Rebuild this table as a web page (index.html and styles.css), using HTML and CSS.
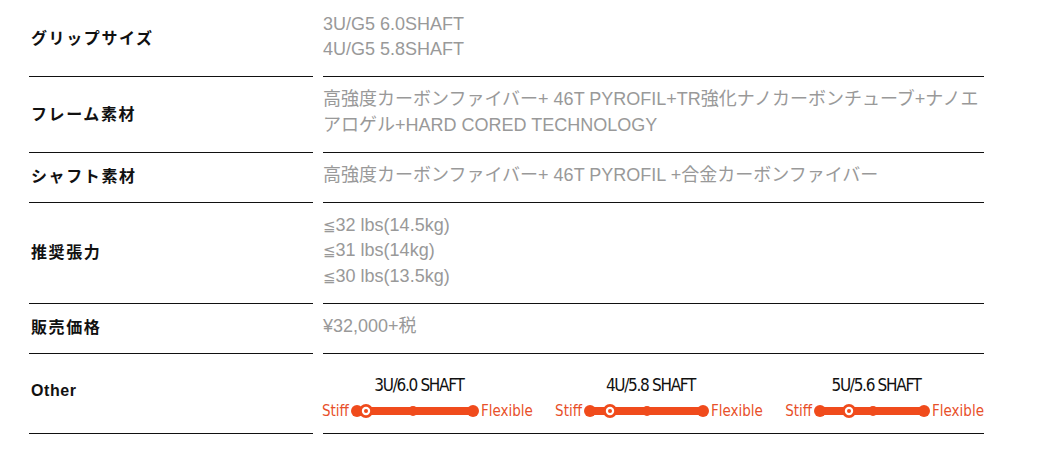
FILE: index.html
```html
<!DOCTYPE html>
<html lang="ja">
<head>
<meta charset="utf-8">
<title>Spec</title>
<link rel="stylesheet" href="styles.css">
</head>
<body>
<div class="spec">
  <div class="label first">グリップサイズ</div>
  <div class="value first">3U/G5 6.0SHAFT<br>4U/G5 5.8SHAFT</div>

  <div class="label">フレーム素材</div>
  <div class="value">高強度カーボンファイバー+ 46T PYROFIL+TR強化ナノカーボンチューブ+ナノエアロゲル+HARD CORED TECHNOLOGY</div>

  <div class="label">シャフト素材</div>
  <div class="value">高強度カーボンファイバー+ 46T PYROFIL +合金カーボンファイバー</div>

  <div class="label">推奨張力</div>
  <div class="value"><span class="le">≦</span>32 lbs(14.5kg)<br><span class="le">≦</span>31 lbs(14kg)<br><span class="le">≦</span>30 lbs(13.5kg)</div>

  <div class="label">販売価格</div>
  <div class="value">¥32,000+税</div>

  <div class="label latin">Other</div>
  <div class="value charts">
    <div class="shaft">
      <span class="end">Stiff</span>
      <div class="mid">
        <div class="title">3U/6.0 SHAFT</div>
        <svg class="bar" width="128" height="14" viewBox="0 0 128 14">
          <line x1="6" y1="7" x2="122" y2="7" stroke="#f04b1c" stroke-width="8"/>
          <circle cx="6" cy="7" r="6" fill="#f04b1c"/>
          <circle cx="122" cy="7" r="6" fill="#f04b1c"/>
          <circle cx="62" cy="7" r="5" fill="#f04b1c"/>
          <circle cx="15" cy="7" r="7" fill="#f04b1c"/>
          <circle cx="15" cy="7" r="4.2" fill="#fff"/>
          <circle cx="15" cy="7" r="2" fill="#f04b1c"/>
        </svg>
      </div>
      <span class="end">Flexible</span>
    </div>
    <div class="shaft">
      <span class="end">Stiff</span>
      <div class="mid">
        <div class="title">4U/5.8 SHAFT</div>
        <svg class="bar" width="125" height="14" viewBox="0 0 125 14">
          <line x1="6" y1="7" x2="119" y2="7" stroke="#f04b1c" stroke-width="8"/>
          <circle cx="6" cy="7" r="6" fill="#f04b1c"/>
          <circle cx="119" cy="7" r="6" fill="#f04b1c"/>
          <circle cx="63" cy="7" r="5" fill="#f04b1c"/>
          <circle cx="26" cy="7" r="7" fill="#f04b1c"/>
          <circle cx="26" cy="7" r="4.2" fill="#fff"/>
          <circle cx="26" cy="7" r="2" fill="#f04b1c"/>
        </svg>
      </div>
      <span class="end">Flexible</span>
    </div>
    <div class="shaft">
      <span class="end">Stiff</span>
      <div class="mid">
        <div class="title">5U/5.6 SHAFT</div>
        <svg class="bar" width="116" height="14" viewBox="0 0 116 14">
          <line x1="6" y1="7" x2="110" y2="7" stroke="#f04b1c" stroke-width="8"/>
          <circle cx="6" cy="7" r="6" fill="#f04b1c"/>
          <circle cx="110" cy="7" r="6" fill="#f04b1c"/>
          <circle cx="59" cy="7" r="5" fill="#f04b1c"/>
          <circle cx="35" cy="7" r="7" fill="#f04b1c"/>
          <circle cx="35" cy="7" r="4.2" fill="#fff"/>
          <circle cx="35" cy="7" r="2" fill="#f04b1c"/>
        </svg>
      </div>
      <span class="end">Flexible</span>
    </div>
  </div>
</div>
</body>
</html>
```

FILE: styles.css
```css
html, body {
  margin: 0;
  padding: 0;
  background: #fff;
}

.spec {
  display: grid;
  grid-template-columns: 284px 661px;
  column-gap: 10px;
  margin-left: 29px;
}

.label,
.value {
  border-bottom: 1px solid #111;
  padding: 10px 0 13.5px;
}

.label.first,
.value.first {
  padding-top: 11.5px;
}

.label {
  display: flex;
  align-items: center;
  padding-left: 2px;
  font-family: "Liberation Sans", "Noto Sans CJK JP", sans-serif;
  font-weight: bold;
  font-size: 16px;
  letter-spacing: 1.6px;
  color: #111;
}

.label.latin {
  letter-spacing: 0.6px;
}

.value {
  font-family: "Liberation Sans", "Noto Sans CJK JP", sans-serif;
  font-size: 18px;
  line-height: 25.5px;
  color: #999;
}

.le {
  font-family: "DejaVu Sans", sans-serif;
  font-size: 15px;
  line-height: 0;
}

.charts {
  display: flex;
  justify-content: space-between;
  padding-bottom: 15px;
}

.shaft {
  display: flex;
  align-items: flex-end;
  gap: 2px;
  padding-top: 9px;
  margin-left: -1px;
}

.mid {
  display: flex;
  flex-direction: column;
  align-items: center;
}

.title {
  font-family: "DejaVu Sans Condensed", "DejaVu Sans", sans-serif;
  font-stretch: condensed;
  font-size: 17px;
  letter-spacing: -1.3px;
  line-height: 24px;
  color: #111;
  padding-left: 8px;
}

.bar {
  display: block;
  margin-top: 7px;
}

.end {
  font-family: "DejaVu Sans Condensed", "DejaVu Sans", sans-serif;
  font-stretch: condensed;
  font-size: 15px;
  line-height: 14px;
  height: 14px;
  color: #e8502a;
}
```
